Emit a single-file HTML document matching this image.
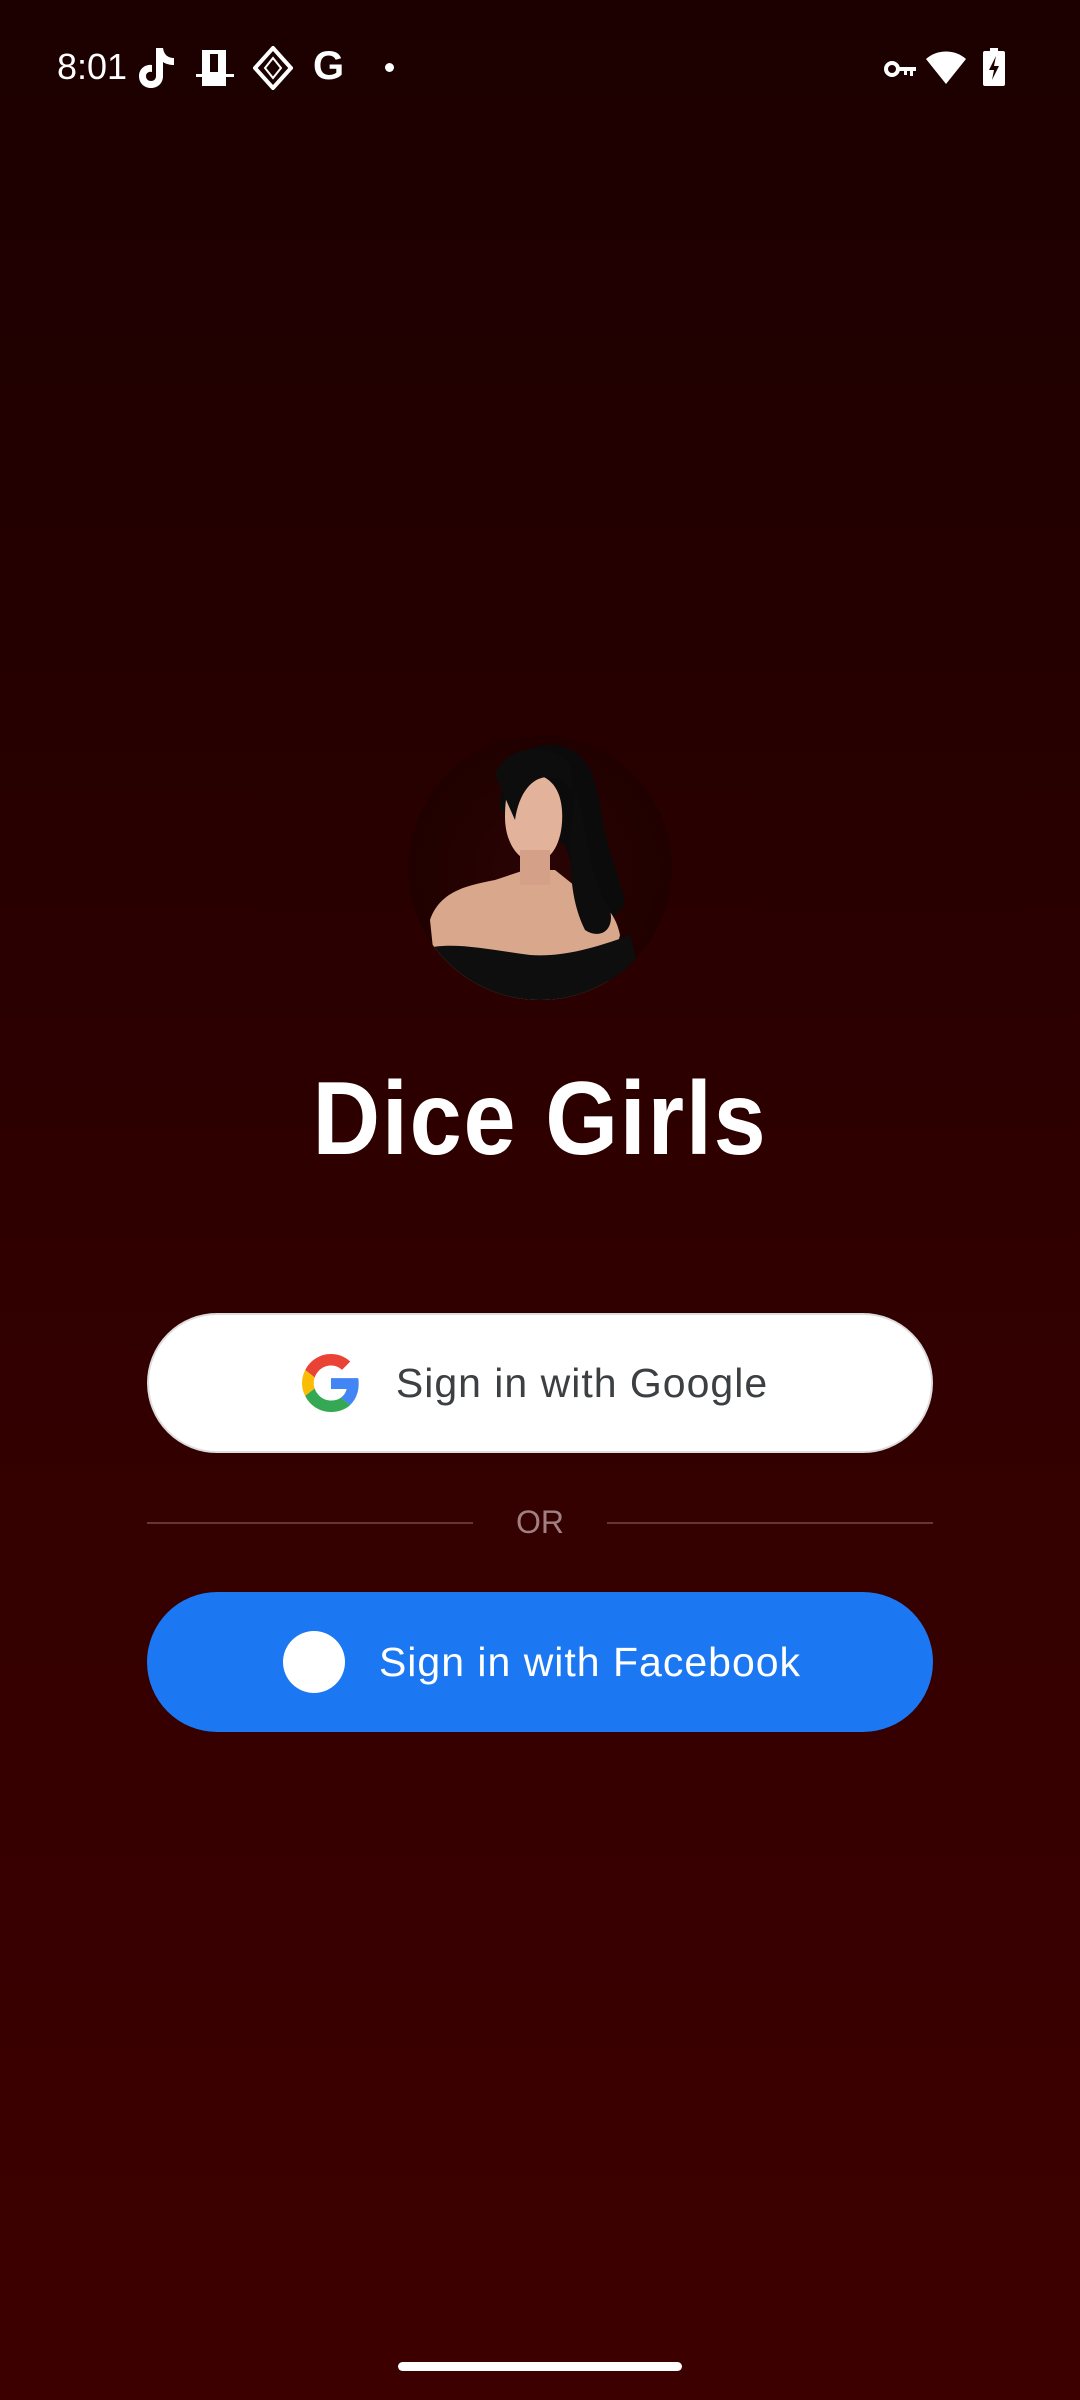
<!DOCTYPE html>
<html><head><meta charset="utf-8"><style>
*{margin:0;padding:0;box-sizing:border-box}
body{width:1080px;height:2400px;overflow:hidden;background:linear-gradient(#1c0000 0%,#260000 30%,#330000 60%,#3d0000 100%);font-family:"Liberation Sans",sans-serif;position:relative;color:#fff}
.abs{position:absolute}
.btn{position:absolute;left:147px;width:786px;height:140px;border-radius:70px;display:flex;align-items:center;justify-content:center;font-size:41px;letter-spacing:1px}
</style></head><body>
<div class="abs" style="left:57px;top:46px;font-size:36px;">8:01</div>
<svg class="abs" style="left:136px;top:46px" width="40" height="44" viewBox="0 0 40 44"><path d="M20 2h7c1 7 5 10 11 10v7c-4 0-8-1-11-3v14c0 7-5 12-12 12S3 37 3 30s6-12 13-11v7c-3-1-6 1-6 4 0 3 2 5 5 5s5-2 5-5z" fill="#fff"/></svg>
<svg class="abs" style="left:196px;top:48px" width="38" height="40" viewBox="0 0 38 40"><rect x="6" y="2" width="24" height="36" fill="#fff"/><rect x="0" y="26" width="38" height="3" fill="#fff"/><rect x="14" y="6" width="8" height="18" fill="#1c0000"/></svg>
<svg class="abs" style="left:253px;top:46px" width="40" height="44" viewBox="0 0 40 44"><path d="M20 2L38 22 20 42 2 22z" fill="none" stroke="#fff" stroke-width="4"/><path d="M20 12l8 10-8 10-8-10z" fill="none" stroke="#fff" stroke-width="2"/></svg>
<div class="abs" style="left:313px;top:44px;font-size:40px;font-weight:bold">G</div>
<div class="abs" style="left:385px;top:63px;width:9px;height:9px;border-radius:50%;background:#fff"></div>
<svg class="abs" style="left:884px;top:58px" width="34" height="22" viewBox="0 0 34 22"><circle cx="8" cy="11" r="6" fill="none" stroke="#fff" stroke-width="4"/><path d="M14 9h18v4h-3v5h-3v-5h-3v4h-3v-4h-6z" fill="#fff"/></svg>
<svg class="abs" style="left:925px;top:50px" width="42" height="34" viewBox="0 0 42 34"><path d="M1 9C12-1 30-1 41 9L21 34z" fill="#fff"/></svg>
<svg class="abs" style="left:983px;top:48px" width="22" height="38" viewBox="0 0 22 38"><rect x="7" y="0" width="8" height="4" fill="#fff"/><rect x="0" y="3" width="22" height="35" rx="2" fill="#fff"/><path d="M13 8L6 22h5l-2 10 7-14h-5z" fill="#1c0000"/></svg>

<svg class="abs" style="left:400px;top:730px" width="280" height="280" viewBox="0 0 280 280">
<defs><clipPath id="c"><circle cx="140" cy="138" r="132"/></clipPath>
<radialGradient id="bg"><stop offset="0" stop-color="#2a0404"/><stop offset="1" stop-color="#200000"/></radialGradient></defs>
<g clip-path="url(#c)">
<rect width="280" height="280" fill="url(#bg)"/>
<path d="M100 80c0-50 25-65 50-65 35 0 45 30 50 60 5 40 20 70 25 100l-30 30-30-90z" fill="#0b0b0b"/>
<path d="M30 190c10-30 40-35 65-40l30-10h30l25 20c20 10 35 20 40 45l-20 80H40z" fill="#d9a88c"/>
<path d="M120 45c20-5 40 5 42 35s-10 52-27 52-30-20-30-45 5-40 15-42z" fill="#e2b29a"/>
<path d="M120 120h30v35h-30z" fill="#d4a088"/>
<path d="M95 45c10-30 55-35 75-10 5 40 0 20-10 15-20-10-40 5-45 40z" fill="#0d0d0d"/>
<path d="M175 60c15 40 10 80 35 120 5 20-10 30-25 20-20-40-15-90-10-140z" fill="#0d0d0d"/>
<path d="M20 220c30-10 70 0 110 5 30 2 60-5 100-20l20 80H20z" fill="#0e0e0e"/>
</g></svg>

<div class="abs" style="left:0;width:1080px;top:1060px;text-align:center;font-size:104px;font-weight:bold;letter-spacing:2px;transform:scaleX(0.9)">Dice Girls</div>

<div class="btn" style="top:1313px;background:#fff;border:2px solid #ddd;color:#3c4043">
<svg width="58" height="58" viewBox="0 0 48 48" style="margin-right:36px"><path fill="#EA4335" d="M24 9.5c3.5 0 6.6 1.2 9.1 3.6l6.8-6.8C35.8 2.4 30.3 0 24 0 14.6 0 6.6 5.4 2.7 13.3l7.9 6.1C12.5 13.6 17.8 9.5 24 9.5z"/><path fill="#4285F4" d="M46.9 24.5c0-1.6-.1-3.1-.4-4.5H24v9h12.9c-.6 3-2.3 5.5-4.8 7.2l7.7 6c4.5-4.2 7.1-10.3 7.1-17.7z"/><path fill="#FBBC05" d="M10.5 28.6c-.5-1.4-.8-3-.8-4.6s.3-3.2.8-4.6l-7.9-6.1C1 16.6 0 20.2 0 24s.9 7.4 2.6 10.7z"/><path fill="#34A853" d="M24 48c6.5 0 11.9-2.1 15.9-5.8l-7.7-6c-2.2 1.5-5 2.3-8.2 2.3-6.3 0-11.6-4.2-13.5-9.9l-7.9 6.1C6.6 42.6 14.6 48 24 48z"/></svg>
<span style="margin-right:10px">Sign in with Google</span></div>

<div class="abs" style="left:147px;top:1522px;width:326px;height:2px;background:#6a3434"></div>
<div class="abs" style="left:607px;top:1522px;width:326px;height:2px;background:#6a3434"></div>
<div class="abs" style="left:0;width:1080px;top:1504px;text-align:center;font-size:32px;color:#a08080">OR</div>

<div class="btn" style="top:1592px;background:#1b77f2;color:#fff">
<div style="width:62px;height:62px;border-radius:50%;background:#fff;margin-right:34px;margin-left:4px"></div>
<span>Sign in with Facebook</span></div>

<div class="abs" style="left:398px;top:2362px;width:284px;height:9px;border-radius:5px;background:#fff"></div>
</body></html>
